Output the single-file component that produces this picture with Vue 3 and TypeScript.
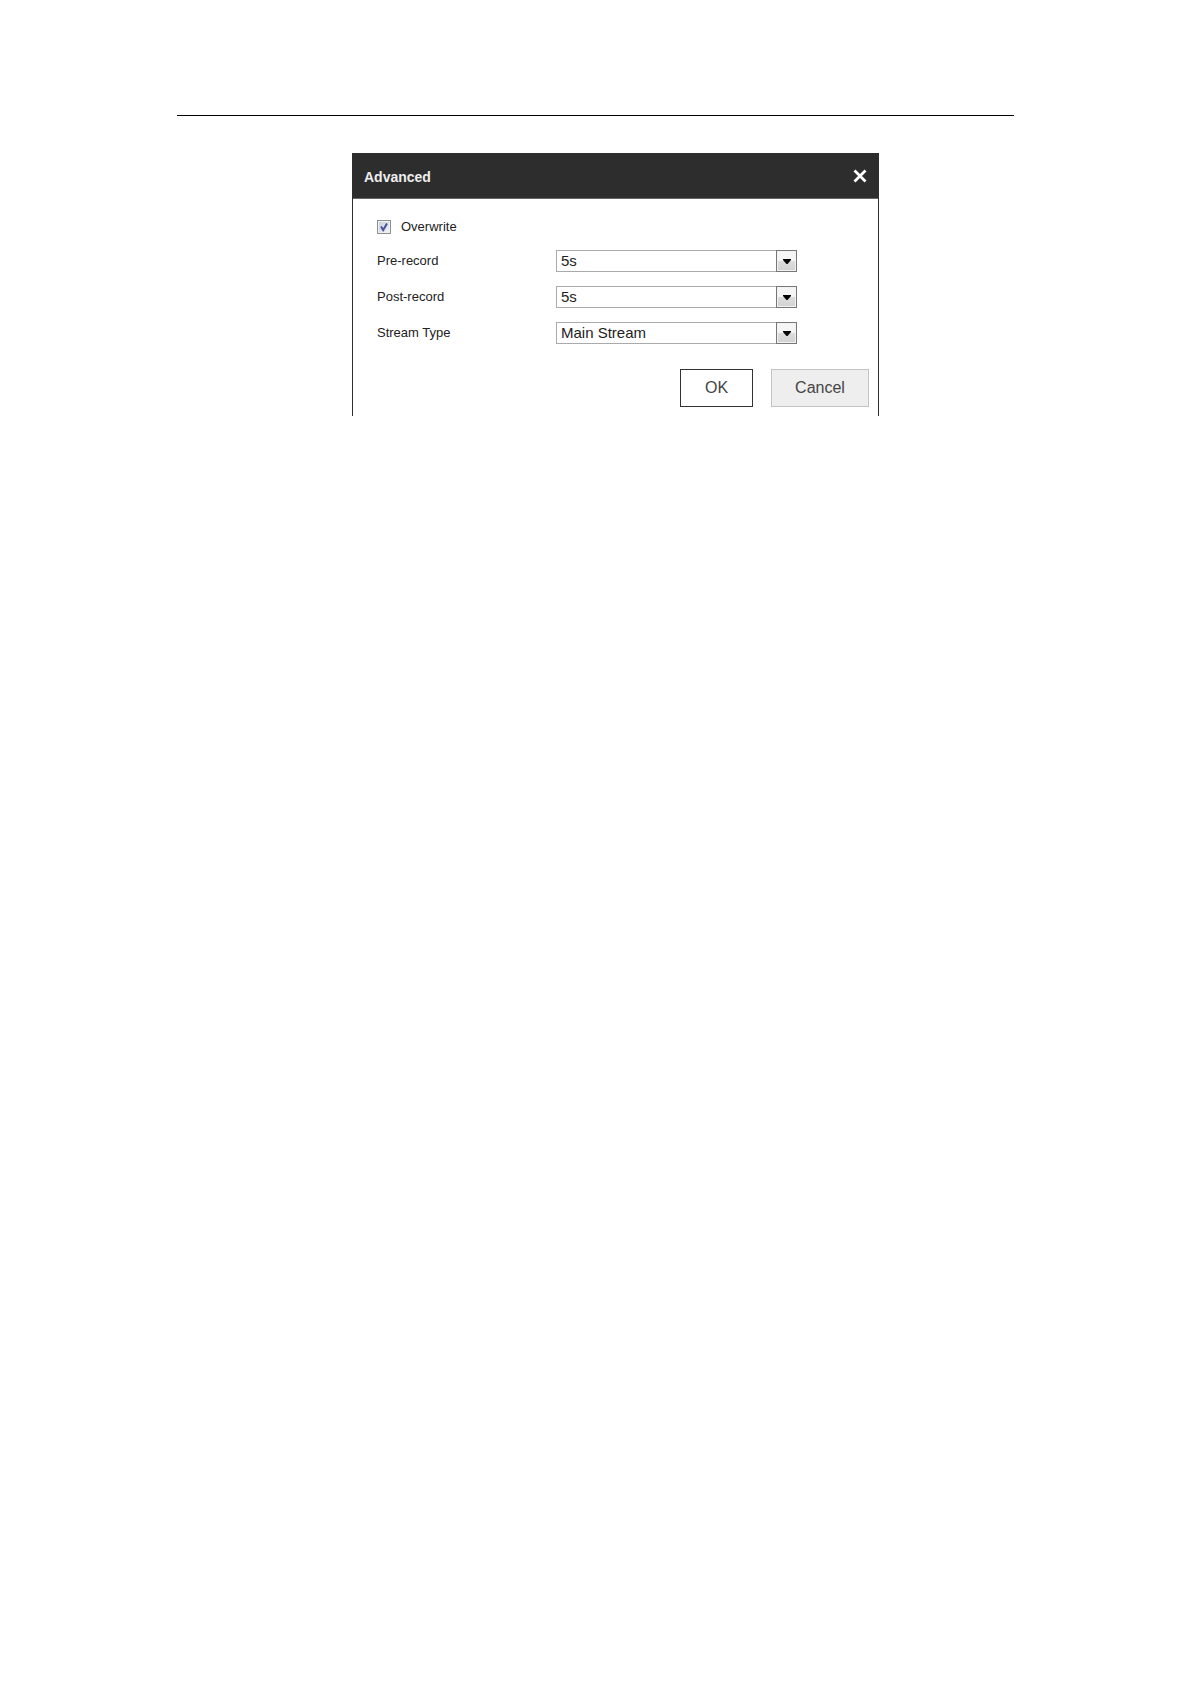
<script setup lang="ts">
import { ref } from 'vue'

interface Field {
  id: string
  label: string
  value: string
  options: string[]
}

const overwrite = ref(true)
const fields = ref<Field[]>([
  { id: 'pre-record', label: 'Pre-record', value: '5s', options: ['5s'] },
  { id: 'post-record', label: 'Post-record', value: '5s', options: ['5s'] },
  { id: 'stream-type', label: 'Stream Type', value: 'Main Stream', options: ['Main Stream'] },
])
</script>

<template>
  <main class="page">
    <hr class="rule" />
    <div class="figure">
      <section class="dialog" role="dialog" aria-labelledby="dialog-title">
        <header class="header">
          <h1 id="dialog-title" class="title">Advanced</h1>
          <button class="close" type="button" aria-label="Close">
            <svg width="14" height="14" viewBox="0 0 14 14">
              <path d="M1.5 1.5 12.5 12.5M12.5 1.5 1.5 12.5" fill="none" stroke="#fff" stroke-width="2.8" />
            </svg>
          </button>
        </header>
        <form class="body" @submit.prevent>
          <label class="check" for="overwrite">
            <span class="tick">
              <input id="overwrite" v-model="overwrite" type="checkbox" class="box" />
              <svg v-if="overwrite" class="mark" width="14" height="14" viewBox="0 0 14 14">
                <path d="M4 6.5 6.2 10 10 3.5" fill="none" stroke="#46529c" stroke-width="2" />
              </svg>
            </span>
            <span>Overwrite</span>
          </label>
          <div v-for="field in fields" :key="field.id" class="row">
            <label class="label" :for="field.id">{{ field.label }}</label>
            <span class="picker">
              <select :id="field.id" v-model="field.value" class="select">
                <option v-for="option in field.options" :key="option">{{ option }}</option>
              </select>
              <span class="arrow">
                <svg width="8" height="5" viewBox="0 0 8 5">
                  <path d="M0 0H8V1L4.5 5H3.5L0 1Z" fill="#000" />
                </svg>
              </span>
            </span>
          </div>
          <div class="actions">
            <button class="button ok" type="submit">OK</button>
            <button class="button cancel" type="button">Cancel</button>
          </div>
        </form>
      </section>
    </div>
  </main>
</template>

<style>
body {
  margin: 0;
  background: #fff;
}
</style>

<style scoped>
.page {
  max-width: 837px;
  margin: 0 auto;
  padding: 115px 24px 0;
  font-family: "Liberation Sans", Arial, sans-serif;
  font-size: 13px;
  line-height: 16px;
  color: #222;
}

.rule {
  height: 1px;
  margin: 0 0 37px;
  border: 0;
  background: #000;
}

.figure {
  display: flex;
  justify-content: center;
  padding-left: 40px;
}

.dialog {
  box-sizing: border-box;
  width: 100%;
  max-width: 527px;
  border: 1px solid #2d2d2d;
  border-width: 0 1px;
}

.header {
  display: flex;
  align-items: center;
  justify-content: space-between;
  height: 45px;
  padding: 0 11px;
  border-bottom: 1px solid #666;
  background: #2d2d2d;
}

.title {
  margin: 0;
  padding-top: 2px;
  font-size: 14px;
  color: #eee;
}

.close {
  display: flex;
  padding: 0;
  border: 0;
  background: none;
}

.body {
  display: flex;
  flex-direction: column;
  gap: 14px;
  padding: 19px 9px 9px 24px;
}

.check {
  display: flex;
  align-items: center;
  gap: 10px;
  height: 18px;
}

.tick {
  display: grid;
}

.box,
.mark {
  grid-area: 1 / 1;
}

.box {
  box-sizing: border-box;
  width: 14px;
  height: 14px;
  margin: 0;
  appearance: none;
  border: 1px solid #8e8f8f;
  background: linear-gradient(135deg, #c4ccd8, #f2f4f8);
  box-shadow: inset 0 0 0 1px #eef0f3;
}

.mark {
  pointer-events: none;
}

.row {
  display: flex;
  align-items: center;
  height: 22px;
}

.label {
  flex: none;
  width: 179px;
}

.picker {
  display: grid;
  flex: 0 1 241px;
}

.select,
.arrow {
  grid-area: 1 / 1;
}

.select {
  box-sizing: border-box;
  width: 100%;
  height: 22px;
  padding: 0 24px 0 4px;
  appearance: none;
  border: 1px solid #aaa;
  border-radius: 0;
  background: #fff;
  font: 15px/20px "Liberation Sans", Arial, sans-serif;
  color: #222;
}

.arrow {
  display: flex;
  align-items: center;
  justify-content: center;
  justify-self: end;
  box-sizing: border-box;
  width: 21px;
  height: 22px;
  border: 1px solid #777;
  background: linear-gradient(#f5f5f5 50%, #dcdcdc 50%, #d2d2d2);
  box-shadow: inset 0 0 0 1px #f2f2f2;
  pointer-events: none;
}

.actions {
  display: flex;
  justify-content: flex-end;
  gap: 18px;
  padding-top: 11px;
}

.button {
  box-sizing: border-box;
  height: 38px;
  padding: 0;
  font: 16px/20px "Liberation Sans", Arial, sans-serif;
  color: #444;
}

.ok {
  width: 73px;
  border: 1px solid #333;
  background: #fff;
}

.cancel {
  width: 98px;
  border: 1px solid #c4c4c4;
  background: #eee;
}
</style>
